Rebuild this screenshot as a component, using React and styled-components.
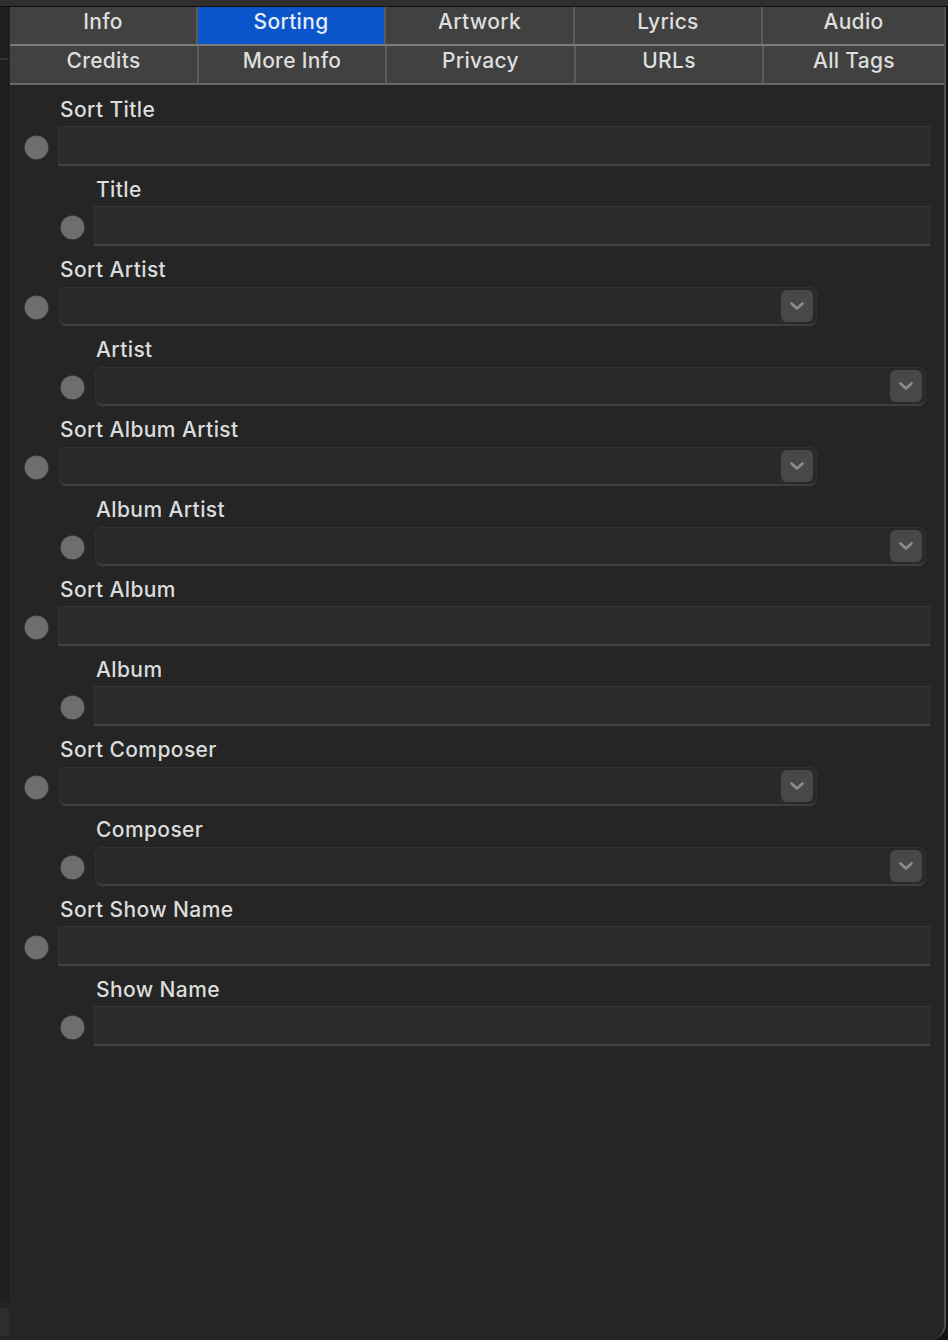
import styled, { createGlobalStyle } from 'styled-components';

const GlobalStyle = createGlobalStyle`
  html, body {
    margin: 0;
    padding: 0;
    background: #0f1516;
    overflow: hidden;
  }
  * { box-sizing: border-box; }
`;

const FONT = `Inter, "Open Sans", "Liberation Sans", sans-serif`;

const TABS = [
  ['Info', 'Sorting', 'Artwork', 'Lyrics', 'Audio'],
  ['Credits', 'More Info', 'Privacy', 'URLs', 'All Tags'],
];

const FIELDS = [
  { label: 'Sort Title', inner: false, combo: false },
  { label: 'Title', inner: true, combo: false },
  { label: 'Sort Artist', inner: false, combo: true },
  { label: 'Artist', inner: true, combo: true },
  { label: 'Sort Album Artist', inner: false, combo: true },
  { label: 'Album Artist', inner: true, combo: true },
  { label: 'Sort Album', inner: false, combo: false },
  { label: 'Album', inner: true, combo: false },
  { label: 'Sort Composer', inner: false, combo: true },
  { label: 'Composer', inner: true, combo: true },
  { label: 'Sort Show Name', inner: false, combo: false },
  { label: 'Show Name', inner: true, combo: false },
];

const Chevron = () => (
  <svg width="16" height="10" viewBox="0 0 16 10">
    <path
      d="M2.5 2.5 L8 7.5 L13.5 2.5"
      fill="none"
      stroke="#8c8d8c"
      strokeWidth="2.6"
      strokeLinecap="round"
      strokeLinejoin="round"
    />
  </svg>
);

const App = () => {
  return (
    <>
      <GlobalStyle />
      <Window>
        <TopBar />
        <Body>
          <Sidebar>
            <SideTop />
            <SideRest />
            <SideFoot />
          </Sidebar>
          <Panel>
            <TabBar>
              {TABS.map((row, r) => (
                <TabRow key={r} $shift={r}>
                  {row.map((t) => (
                    <Tab key={t} $active={t === 'Sorting'}>
                      {t}
                    </Tab>
                  ))}
                </TabRow>
              ))}
            </TabBar>
            <Form>
              {FIELDS.map((f) => (
                <Field key={f.label} $inner={f.inner}>
                  <Label>{f.label}</Label>
                  <Line>
                    <Radio />
                    {f.combo ? (
                      <Combo $inner={f.inner}>
                        <ComboButton>
                          <Chevron />
                        </ComboButton>
                      </Combo>
                    ) : (
                      <TextBox />
                    )}
                  </Line>
                </Field>
              ))}
            </Form>
          </Panel>
        </Body>
      </Window>
    </>
  );
};

export default App;

const Window = styled.div`
  width: 948px;
  height: 1340px;
  display: flex;
  flex-direction: column;
  font-family: ${FONT};
`;

const TopBar = styled.div`
  height: 7px;
  flex: none;
  background: #2e2f2e;
  border-bottom: 1px solid #0f100f;
`;

const Body = styled.div`
  flex: 1;
  display: flex;
  min-height: 0;
`;

const Sidebar = styled.div`
  width: 9px;
  flex: none;
  display: flex;
  flex-direction: column;
  background: #242524;
`;

const SideTop = styled.div`
  height: 53px;
  background: #1e201f;
  border-bottom: 2px solid #333433;
  border-right: 1px solid #191a19;
`;

const SideRest = styled.div`
  height: 1240px;
  background: #1e201f;
  border-right: 1px solid #191a19;
`;

const SideFoot = styled.div`
  margin-top: 8px;
  height: 28px;
  background: #2c2d2c;
`;

const Panel = styled.div`
  flex: 1;
  display: flex;
  flex-direction: column;
  background: #242524;
  border-right: 2px solid #4d4e4d;
  border-bottom-right-radius: 16px;
  margin-right: 2px;
  padding-left: 1px;
`;

const TabBar = styled.div`
  display: flex;
  flex-direction: column;
`;

const TabRow = styled.div`
  display: grid;
  grid-template-columns: ${(p) =>
    p.$shift ? '189px 188px 189px 188px 1fr' : '188px 188px 189px 188px 1fr'};
  height: 39px;
  border-bottom: 2px solid ${(p) => (p.$shift ? '#666766' : '#7a7b7a')};
  background: #3f403f;
`;

const Tab = styled.div`
  display: flex;
  align-items: center;
  justify-content: center;
  padding-bottom: 8px;
  font-size: 21px;
  font-weight: 500;
  letter-spacing: 0.3px;
  color: ${(p) => (p.$active ? '#e6ecf7' : '#dedede')};
  background: ${(p) => (p.$active ? '#0a55c9' : '#404140')};
  border-right: 2px solid #5b5c5b;
  &:last-child {
    border-right: none;
  }
`;

const Form = styled.div`
  display: flex;
  flex-direction: column;
  gap: 12px;
  padding: 13px 14px 0 15px;
`;

const Field = styled.div`
  display: flex;
  flex-direction: column;
  gap: 4px;
  padding-left: ${(p) => (p.$inner ? '36px' : '0')};
`;

const Label = styled.div`
  font-size: 21px;
  font-weight: 500;
  letter-spacing: 0.4px;
  line-height: 24px;
  color: #dcdcdc;
  padding-left: 35px;
`;

const Line = styled.div`
  display: flex;
  align-items: center;
  gap: 10px;
  height: 40px;
`;

const Radio = styled.div`
  width: 23px;
  height: 23px;
  flex: none;
  margin-top: 3px;
  border-radius: 50%;
  background: #6d6e6d;
  box-shadow: 0 0 1px 0.5px #5a5b5a;
`;

const TextBox = styled.div`
  flex: 1;
  height: 40px;
  background: #2a2b2a;
  border: 1px solid #333433;
  border-bottom: 2px solid #444544;
`;

const Combo = styled.div`
  height: 39px;
  width: ${(p) => (p.$inner ? '831px' : '758px')};
  margin-left: 1px;
  display: flex;
  align-items: center;
  justify-content: flex-end;
  padding-right: 3px;
  background: #282928;
  border: 1px solid #323332;
  border-bottom: 2px solid #3e3f3e;
  border-radius: 7px;
`;

const ComboButton = styled.div`
  width: 32px;
  height: 32px;
  display: flex;
  align-items: center;
  justify-content: center;
  border-radius: 6px;
  background: #474847;
`;
